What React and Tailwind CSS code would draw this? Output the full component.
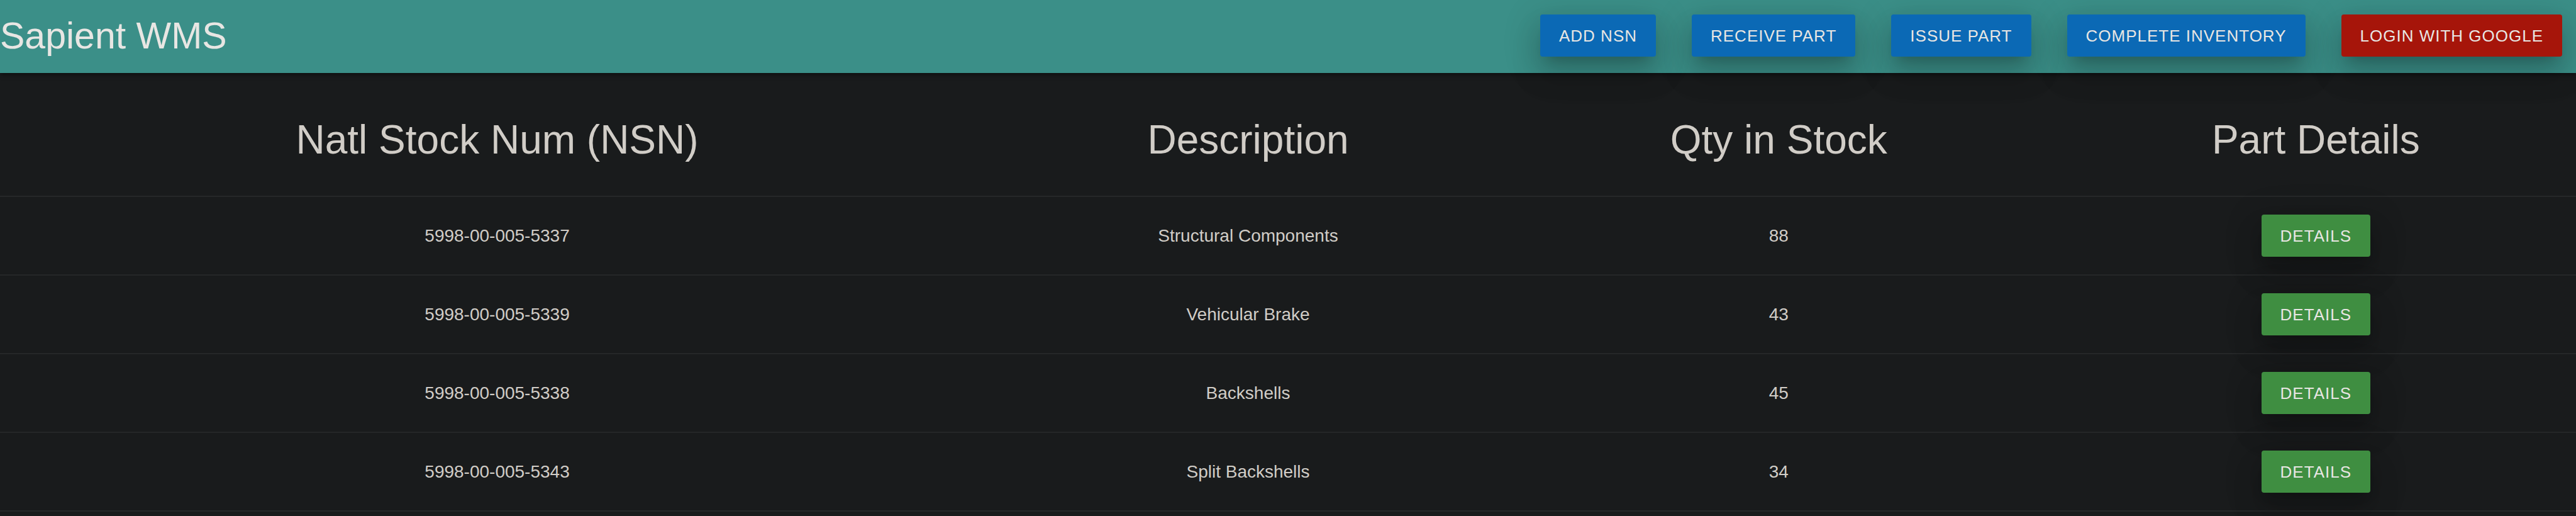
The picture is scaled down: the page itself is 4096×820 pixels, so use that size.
const actions = ["Add NSN", "Receive Part", "Issue Part", "Complete Inventory"];

const parts = [
  { nsn: "5998-00-005-5337", description: "Structural Components", qty: 88 },
  { nsn: "5998-00-005-5339", description: "Vehicular Brake", qty: 43 },
  { nsn: "5998-00-005-5338", description: "Backshells", qty: 45 },
  { nsn: "5998-00-005-5343", description: "Split Backshells", qty: 34 },
];

const columns = [
  { label: "Natl Stock Num (NSN)", width: "w-[38.6%]" },
  { label: "Description", width: "w-[19.7%]" },
  { label: "Qty in Stock", width: "w-[21.5%]" },
  { label: "Part Details", width: "w-[20.2%]" },
];

function Button({ color, children }) {
  return (
    <button
      type="button"
      className={`h-[67px] cursor-pointer rounded px-[30px] text-[26px] leading-[68px] tracking-[1px] whitespace-nowrap text-[#e8e6e3] uppercase shadow-[0_30px_45px_4px_rgba(0,0,0,0.14),0_11px_56px_9px_rgba(0,0,0,0.12),0_15px_19px_-13px_rgba(0,0,0,0.2)] ${color}`}
    >
      {children}
    </button>
  );
}

function NavBar() {
  return (
    <nav className="flex items-center justify-between bg-[#3b8f88] pt-[23px] pr-[22px] pb-[26px] shadow-[0_4px_4px_0_rgba(0,0,0,0.14),0_6px_2px_-4px_rgba(0,0,0,0.12),0_2px_10px_0_rgba(0,0,0,0.2)]">
      <a href="#" className="text-[59px] leading-[64px] whitespace-nowrap text-[#e8e6e3]">
        Sapient WMS
      </a>
      <div className="flex gap-[57px]">
        {actions.map((label) => (
          <Button key={label} color="bg-[#0b69b5]">
            {label}
          </Button>
        ))}
        <Button color="bg-[#a6150a]">Login with Google</Button>
      </div>
    </nav>
  );
}

export default function App() {
  return (
    <div className="min-h-screen bg-[#191b1c] font-['Liberation_Sans',Arial,sans-serif] text-[#d1cdc7]">
      <NavBar />
      <table className="w-full table-fixed border-collapse text-center text-[28px] leading-[42px]">
        <thead>
          <tr className="border-b-2 border-[#252728]">
            {columns.map((column) => (
              <th
                key={column.label}
                scope="col"
                className={`pt-[71px] pb-[54px] text-[64px] leading-[70px] font-normal ${column.width}`}
              >
                {column.label}
              </th>
            ))}
          </tr>
        </thead>
        <tbody>
          {parts.map((part) => (
            <tr key={part.nsn} className="border-b-2 border-[#252728]">
              <td>{part.nsn}</td>
              <td>{part.description}</td>
              <td>{part.qty}</td>
              <td className="py-7">
                <div className="flex justify-center">
                  <Button color="bg-[#3f8e41]">Details</Button>
                </div>
              </td>
            </tr>
          ))}
        </tbody>
      </table>
    </div>
  );
}
